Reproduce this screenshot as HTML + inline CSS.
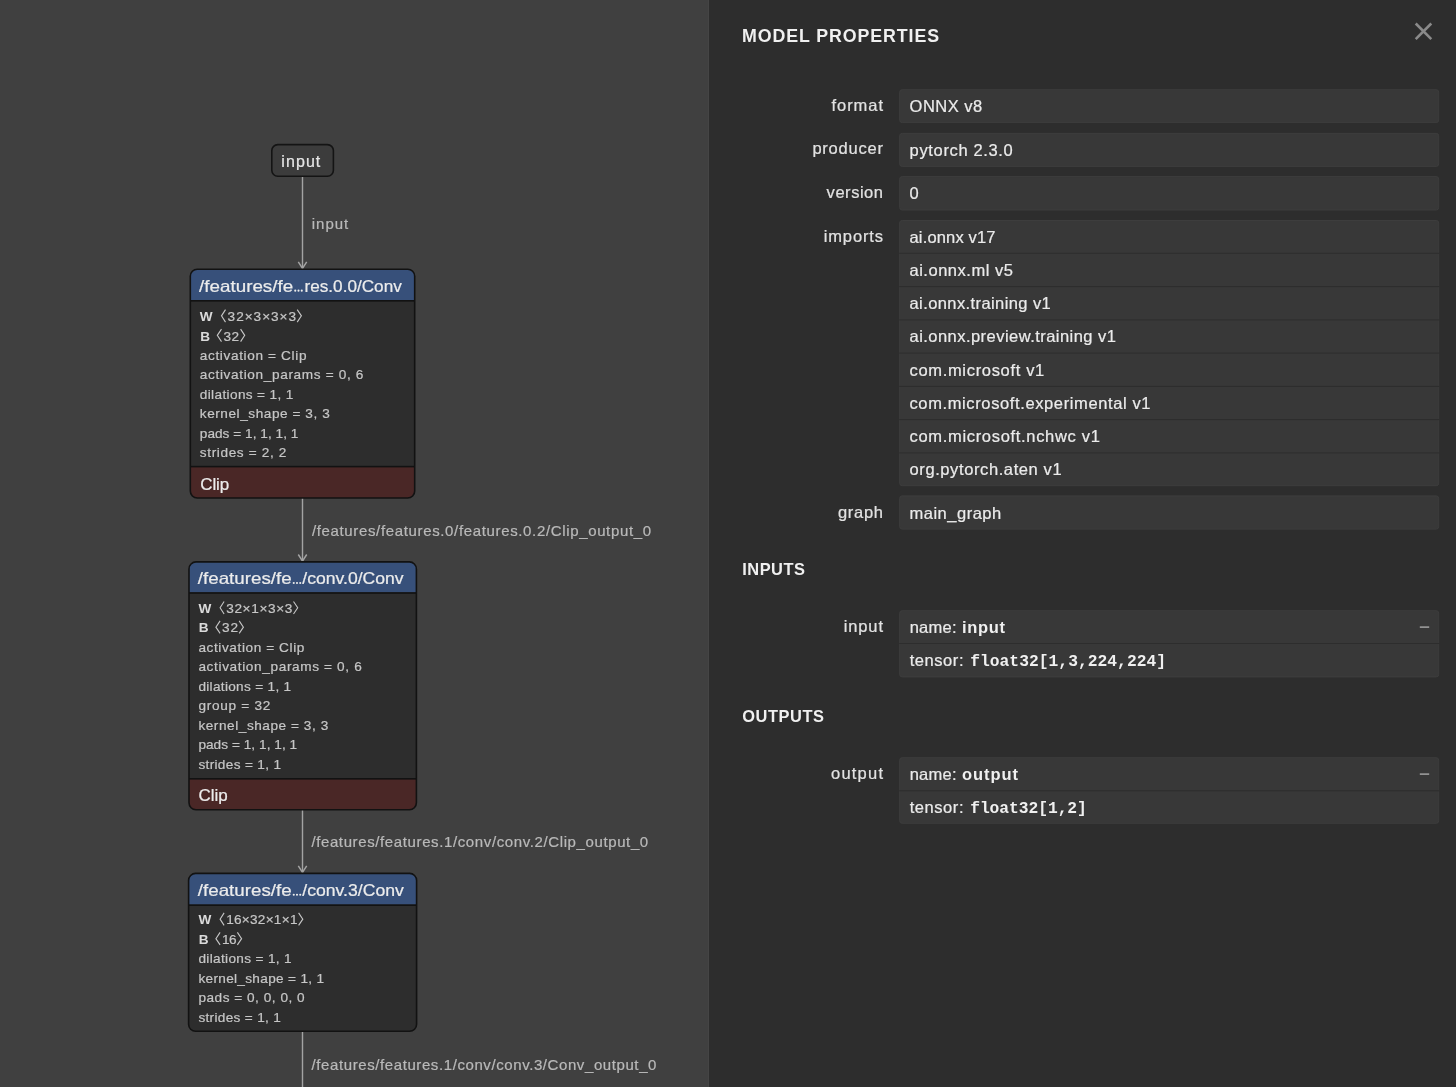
<!DOCTYPE html>
<html><head><meta charset="utf-8"><title>Netron</title>
<style>html,body{margin:0;padding:0;background:#404040;overflow:hidden;width:1456px;height:1087px}svg{display:block;will-change:transform}</style>
</head><body>
<svg width="1456" height="1087" viewBox="0 0 1456 1087"><rect x="0" y="0" width="1456" height="1087" fill="#404040"/>
<line x1="302.5" y1="177" x2="302.5" y2="269" stroke="#a3a3a3" stroke-width="1.4"/><path d="M298.3,261.8 L302.5,268.4 L306.7,261.8" fill="none" stroke="#a3a3a3" stroke-width="1.5" stroke-linejoin="miter"/>
<line x1="302.5" y1="498" x2="302.5" y2="561.7" stroke="#a3a3a3" stroke-width="1.4"/><path d="M298.3,554.5 L302.5,561.1 L306.7,554.5" fill="none" stroke="#a3a3a3" stroke-width="1.5" stroke-linejoin="miter"/>
<line x1="302.5" y1="809.8" x2="302.5" y2="873" stroke="#a3a3a3" stroke-width="1.4"/><path d="M298.3,865.8 L302.5,872.4 L306.7,865.8" fill="none" stroke="#a3a3a3" stroke-width="1.5" stroke-linejoin="miter"/>
<line x1="302.5" y1="1031.3" x2="302.5" y2="1096" stroke="#a3a3a3" stroke-width="1.4"/><path d="M298.3,1088.8 L302.5,1095.4 L306.7,1088.8" fill="none" stroke="#a3a3a3" stroke-width="1.5" stroke-linejoin="miter"/>
<text x="311.80" y="228.80" font-family='"Liberation Sans", sans-serif' font-size="15.0" font-weight="normal" fill="#b9b9b9" stroke="#b9b9b9" stroke-width="0.22" letter-spacing="0.972">input</text>
<text x="311.90" y="536.00" font-family='"Liberation Sans", sans-serif' font-size="15.0" font-weight="normal" fill="#b9b9b9" stroke="#b9b9b9" stroke-width="0.22" letter-spacing="0.648">/features/features.0/features.0.2/Clip_output_0</text>
<text x="311.40" y="847.40" font-family='"Liberation Sans", sans-serif' font-size="15.0" font-weight="normal" fill="#b9b9b9" stroke="#b9b9b9" stroke-width="0.22" letter-spacing="0.616">/features/features.1/conv/conv.2/Clip_output_0</text>
<text x="311.60" y="1069.80" font-family='"Liberation Sans", sans-serif' font-size="15.0" font-weight="normal" fill="#b9b9b9" stroke="#b9b9b9" stroke-width="0.22" letter-spacing="0.590">/features/features.1/conv/conv.3/Conv_output_0</text>
<rect x="271.8" y="144.6" width="61.6" height="31.6" rx="6" ry="6" fill="#3c3c3c" stroke="#141414" stroke-width="1.6"/>
<text x="281.30" y="167.10" font-family='"Liberation Sans", sans-serif' font-size="16.0" font-weight="normal" fill="#e6e6e6" stroke="#e6e6e6" stroke-width="0.22" letter-spacing="1.080">input</text>
<clipPath id="c269"><rect x="190.3" y="269.2" width="224.39999999999998" height="228.8" rx="7" ry="7"/></clipPath><g clip-path="url(#c269)"><rect x="190.3" y="269.2" width="224.39999999999998" height="228.8" fill="#2d2d2d"/><rect x="190.3" y="269.2" width="224.39999999999998" height="31.0" fill="#37507a"/><rect x="190.3" y="300.0" width="224.39999999999998" height="1.6" fill="#121212"/><rect x="190.3" y="466.6" width="224.39999999999998" height="31.399999999999977" fill="#4a2726"/><rect x="190.3" y="465.8" width="224.39999999999998" height="1.6" fill="#121212"/></g><rect x="190.3" y="269.2" width="224.39999999999998" height="228.8" rx="7" ry="7" fill="none" stroke="#121212" stroke-width="1.6"/>
<text x="199.10" y="291.70" font-family='"Liberation Sans", sans-serif' font-size="16.5" font-weight="normal" fill="#ececec" stroke="#ececec" stroke-width="0.22" textLength="94.11" lengthAdjust="spacingAndGlyphs">/features/fe</text>
<circle cx="295.25" cy="290.65" r="1.05" fill="#ececec"/><circle cx="298.50" cy="290.65" r="1.05" fill="#ececec"/><circle cx="301.75" cy="290.65" r="1.05" fill="#ececec"/>
<text x="304.50" y="291.70" font-family='"Liberation Sans", sans-serif' font-size="16.5" font-weight="normal" fill="#ececec" stroke="#ececec" stroke-width="0.22" textLength="97.29" lengthAdjust="spacingAndGlyphs">res.0.0/Conv</text>
<text x="199.80" y="321.00" font-family='"Liberation Sans", sans-serif' font-size="13.6" font-weight="bold" fill="#dadada" letter-spacing="-0.352">W</text><path d="M225.5,309.6 L221.5,315.85 L225.5,322.1" fill="none" stroke="#c6c6c6" stroke-width="1.1"/><text x="227.60" y="321.00" font-family='"Liberation Sans", sans-serif' font-size="13.6" font-weight="normal" fill="#c6c6c6" stroke="#c6c6c6" stroke-width="0.22" letter-spacing="0.980">32×3×3×3</text><path d="M297.2,309.6 L301.4,315.85 L297.2,322.1" fill="none" stroke="#c6c6c6" stroke-width="1.1"/>
<text x="200.20" y="340.50" font-family='"Liberation Sans", sans-serif' font-size="13.6" font-weight="bold" fill="#dadada" letter-spacing="-1.926">B</text><path d="M221.5,329.1 L217.3,335.35 L221.5,341.6" fill="none" stroke="#c6c6c6" stroke-width="1.1"/><text x="223.40" y="340.50" font-family='"Liberation Sans", sans-serif' font-size="13.6" font-weight="normal" fill="#c6c6c6" stroke="#c6c6c6" stroke-width="0.22" letter-spacing="0.470">32</text><path d="M240.6,329.1 L244.7,335.35 L240.6,341.6" fill="none" stroke="#c6c6c6" stroke-width="1.1"/>
<text x="199.80" y="360.00" font-family='"Liberation Sans", sans-serif' font-size="13.6" font-weight="normal" fill="#c6c6c6" stroke="#c6c6c6" stroke-width="0.22" letter-spacing="0.644">activation = Clip</text>
<text x="199.80" y="379.40" font-family='"Liberation Sans", sans-serif' font-size="13.6" font-weight="normal" fill="#c6c6c6" stroke="#c6c6c6" stroke-width="0.22" letter-spacing="0.655">activation_params = 0, 6</text>
<text x="199.80" y="398.90" font-family='"Liberation Sans", sans-serif' font-size="13.6" font-weight="normal" fill="#c6c6c6" stroke="#c6c6c6" stroke-width="0.22" letter-spacing="0.367">dilations = 1, 1</text>
<text x="199.80" y="418.30" font-family='"Liberation Sans", sans-serif' font-size="13.6" font-weight="normal" fill="#c6c6c6" stroke="#c6c6c6" stroke-width="0.22" letter-spacing="0.564">kernel_shape = 3, 3</text>
<text x="199.80" y="437.80" font-family='"Liberation Sans", sans-serif' font-size="13.6" font-weight="normal" fill="#c6c6c6" stroke="#c6c6c6" stroke-width="0.22" letter-spacing="0.042">pads = 1, 1, 1, 1</text>
<text x="199.80" y="457.20" font-family='"Liberation Sans", sans-serif' font-size="13.6" font-weight="normal" fill="#c6c6c6" stroke="#c6c6c6" stroke-width="0.22" letter-spacing="0.636">strides = 2, 2</text>
<text x="200.20" y="489.60" font-family='"Liberation Sans", sans-serif' font-size="17.0" font-weight="normal" fill="#ececec" stroke="#ececec" stroke-width="0.22" letter-spacing="-0.061">Clip</text>
<clipPath id="c561"><rect x="189.0" y="561.9" width="227.39999999999998" height="247.89999999999998" rx="7" ry="7"/></clipPath><g clip-path="url(#c561)"><rect x="189.0" y="561.9" width="227.39999999999998" height="247.89999999999998" fill="#2d2d2d"/><rect x="189.0" y="561.9" width="227.39999999999998" height="30.5" fill="#37507a"/><rect x="189.0" y="592.1999999999999" width="227.39999999999998" height="1.6" fill="#121212"/><rect x="189.0" y="778.8" width="227.39999999999998" height="31.0" fill="#4a2726"/><rect x="189.0" y="778.0" width="227.39999999999998" height="1.6" fill="#121212"/></g><rect x="189.0" y="561.9" width="227.39999999999998" height="247.89999999999998" rx="7" ry="7" fill="none" stroke="#121212" stroke-width="1.6"/>
<text x="197.80" y="584.00" font-family='"Liberation Sans", sans-serif' font-size="16.5" font-weight="normal" fill="#ececec" stroke="#ececec" stroke-width="0.22" textLength="93.91" lengthAdjust="spacingAndGlyphs">/features/fe</text>
<circle cx="293.75" cy="582.95" r="1.05" fill="#ececec"/><circle cx="297.00" cy="582.95" r="1.05" fill="#ececec"/><circle cx="300.25" cy="582.95" r="1.05" fill="#ececec"/>
<text x="302.30" y="584.00" font-family='"Liberation Sans", sans-serif' font-size="16.5" font-weight="normal" fill="#ececec" stroke="#ececec" stroke-width="0.22" textLength="101.30" lengthAdjust="spacingAndGlyphs">/conv.0/Conv</text>
<text x="198.40" y="612.90" font-family='"Liberation Sans", sans-serif' font-size="13.6" font-weight="bold" fill="#dadada" letter-spacing="-0.352">W</text><path d="M224.1,601.5 L220.1,607.75 L224.1,614.0" fill="none" stroke="#c6c6c6" stroke-width="1.1"/><text x="226.20" y="612.90" font-family='"Liberation Sans", sans-serif' font-size="13.6" font-weight="normal" fill="#c6c6c6" stroke="#c6c6c6" stroke-width="0.22" letter-spacing="0.651">32×1×3×3</text><path d="M293.5,601.5 L297.7,607.75 L293.5,614.0" fill="none" stroke="#c6c6c6" stroke-width="1.1"/>
<text x="198.80" y="632.30" font-family='"Liberation Sans", sans-serif' font-size="13.6" font-weight="bold" fill="#dadada" letter-spacing="-1.926">B</text><path d="M220.1,620.9 L215.9,627.15 L220.1,633.4" fill="none" stroke="#c6c6c6" stroke-width="1.1"/><text x="222.00" y="632.30" font-family='"Liberation Sans", sans-serif' font-size="13.6" font-weight="normal" fill="#c6c6c6" stroke="#c6c6c6" stroke-width="0.22" letter-spacing="0.970">32</text><path d="M239.2,620.9 L243.4,627.15 L239.2,633.4" fill="none" stroke="#c6c6c6" stroke-width="1.1"/>
<text x="198.40" y="651.80" font-family='"Liberation Sans", sans-serif' font-size="13.6" font-weight="normal" fill="#c6c6c6" stroke="#c6c6c6" stroke-width="0.22" letter-spacing="0.601">activation = Clip</text>
<text x="198.40" y="671.30" font-family='"Liberation Sans", sans-serif' font-size="13.6" font-weight="normal" fill="#c6c6c6" stroke="#c6c6c6" stroke-width="0.22" letter-spacing="0.646">activation_params = 0, 6</text>
<text x="198.40" y="690.70" font-family='"Liberation Sans", sans-serif' font-size="13.6" font-weight="normal" fill="#c6c6c6" stroke="#c6c6c6" stroke-width="0.22" letter-spacing="0.314">dilations = 1, 1</text>
<text x="198.40" y="710.20" font-family='"Liberation Sans", sans-serif' font-size="13.6" font-weight="normal" fill="#c6c6c6" stroke="#c6c6c6" stroke-width="0.22" letter-spacing="0.732">group = 32</text>
<text x="198.40" y="729.70" font-family='"Liberation Sans", sans-serif' font-size="13.6" font-weight="normal" fill="#c6c6c6" stroke="#c6c6c6" stroke-width="0.22" letter-spacing="0.558">kernel_shape = 3, 3</text>
<text x="198.40" y="749.20" font-family='"Liberation Sans", sans-serif' font-size="13.6" font-weight="normal" fill="#c6c6c6" stroke="#c6c6c6" stroke-width="0.22" letter-spacing="0.055">pads = 1, 1, 1, 1</text>
<text x="198.40" y="768.60" font-family='"Liberation Sans", sans-serif' font-size="13.6" font-weight="normal" fill="#c6c6c6" stroke="#c6c6c6" stroke-width="0.22" letter-spacing="0.336">strides = 1, 1</text>
<text x="198.60" y="800.90" font-family='"Liberation Sans", sans-serif' font-size="17.0" font-weight="normal" fill="#ececec" stroke="#ececec" stroke-width="0.22" letter-spacing="-0.061">Clip</text>
<clipPath id="c873"><rect x="188.6" y="873.4" width="228.00000000000003" height="157.89999999999998" rx="7" ry="7"/></clipPath><g clip-path="url(#c873)"><rect x="188.6" y="873.4" width="228.00000000000003" height="157.89999999999998" fill="#2d2d2d"/><rect x="188.6" y="873.4" width="228.00000000000003" height="31.200000000000045" fill="#37507a"/><rect x="188.6" y="904.4" width="228.00000000000003" height="1.6" fill="#121212"/></g><rect x="188.6" y="873.4" width="228.00000000000003" height="157.89999999999998" rx="7" ry="7" fill="none" stroke="#121212" stroke-width="1.6"/>
<text x="197.80" y="895.80" font-family='"Liberation Sans", sans-serif' font-size="16.5" font-weight="normal" fill="#ececec" stroke="#ececec" stroke-width="0.22" textLength="93.91" lengthAdjust="spacingAndGlyphs">/features/fe</text>
<circle cx="293.75" cy="894.75" r="1.05" fill="#ececec"/><circle cx="297.00" cy="894.75" r="1.05" fill="#ececec"/><circle cx="300.25" cy="894.75" r="1.05" fill="#ececec"/>
<text x="302.30" y="895.80" font-family='"Liberation Sans", sans-serif' font-size="16.5" font-weight="normal" fill="#ececec" stroke="#ececec" stroke-width="0.22" textLength="101.50" lengthAdjust="spacingAndGlyphs">/conv.3/Conv</text>
<text x="198.40" y="924.30" font-family='"Liberation Sans", sans-serif' font-size="13.6" font-weight="bold" fill="#dadada" letter-spacing="-0.352">W</text><path d="M224.1,912.9 L220.1,919.15 L224.1,925.4" fill="none" stroke="#c6c6c6" stroke-width="1.1"/><text x="226.20" y="924.30" font-family='"Liberation Sans", sans-serif' font-size="13.6" font-weight="normal" fill="#c6c6c6" stroke="#c6c6c6" stroke-width="0.22" letter-spacing="0.260">16×32×1×1</text><path d="M298.6,912.9 L302.8,919.15 L298.6,925.4" fill="none" stroke="#c6c6c6" stroke-width="1.1"/>
<text x="198.80" y="943.80" font-family='"Liberation Sans", sans-serif' font-size="13.6" font-weight="bold" fill="#dadada" letter-spacing="-1.926">B</text><path d="M220.1,932.4 L215.9,938.65 L220.1,944.9" fill="none" stroke="#c6c6c6" stroke-width="1.1"/><text x="222.00" y="943.80" font-family='"Liberation Sans", sans-serif' font-size="13.6" font-weight="normal" fill="#c6c6c6" stroke="#c6c6c6" stroke-width="0.22" letter-spacing="-0.630">16</text><path d="M237.4,932.4 L241.6,938.65 L237.4,944.9" fill="none" stroke="#c6c6c6" stroke-width="1.1"/>
<text x="198.40" y="963.30" font-family='"Liberation Sans", sans-serif' font-size="13.6" font-weight="normal" fill="#c6c6c6" stroke="#c6c6c6" stroke-width="0.22" letter-spacing="0.347">dilations = 1, 1</text>
<text x="198.40" y="982.80" font-family='"Liberation Sans", sans-serif' font-size="13.6" font-weight="normal" fill="#c6c6c6" stroke="#c6c6c6" stroke-width="0.22" letter-spacing="0.325">kernel_shape = 1, 1</text>
<text x="198.40" y="1002.40" font-family='"Liberation Sans", sans-serif' font-size="13.6" font-weight="normal" fill="#c6c6c6" stroke="#c6c6c6" stroke-width="0.22" letter-spacing="0.524">pads = 0, 0, 0, 0</text>
<text x="198.40" y="1021.90" font-family='"Liberation Sans", sans-serif' font-size="13.6" font-weight="normal" fill="#c6c6c6" stroke="#c6c6c6" stroke-width="0.22" letter-spacing="0.328">strides = 1, 1</text>
<rect x="708" y="0" width="1" height="1087" fill="#454545"/>
<rect x="709" y="0" width="747" height="1087" fill="#2d2d2d"/>
<text x="742.10" y="41.60" font-family='"Liberation Sans", sans-serif' font-size="17.8" font-weight="bold" fill="#f0f0f0" letter-spacing="0.903">MODEL PROPERTIES</text>
<path d="M1415.7,23.5 L1431.3,39.1 M1431.3,23.5 L1415.7,39.1" stroke="#8a8a8a" stroke-width="2.6" fill="none"/>
<rect x="899.7" y="89.7" width="539.0" height="32.89999999999999" rx="2.5" ry="2.5" fill="#383838" stroke="#3d3d3d" stroke-width="1"/>
<text x="831.60" y="110.90" font-family='"Liberation Sans", sans-serif' font-size="16.5" font-weight="normal" fill="#e2e2e2" stroke="#e2e2e2" stroke-width="0.22" letter-spacing="0.924">format</text>
<text x="909.60" y="112.30" font-family='"Liberation Sans", sans-serif' font-size="16.5" font-weight="normal" fill="#ebebeb" stroke="#ebebeb" stroke-width="0.22" letter-spacing="0.471">ONNX v8</text>
<rect x="899.7" y="133.4" width="539.0" height="33.0" rx="2.5" ry="2.5" fill="#383838" stroke="#3d3d3d" stroke-width="1"/>
<text x="812.40" y="154.30" font-family='"Liberation Sans", sans-serif' font-size="16.5" font-weight="normal" fill="#e2e2e2" stroke="#e2e2e2" stroke-width="0.22" letter-spacing="0.781">producer</text>
<text x="909.60" y="155.60" font-family='"Liberation Sans", sans-serif' font-size="16.5" font-weight="normal" fill="#ebebeb" stroke="#ebebeb" stroke-width="0.22" letter-spacing="0.649">pytorch 2.3.0</text>
<rect x="899.7" y="176.6" width="539.0" height="33.400000000000006" rx="2.5" ry="2.5" fill="#383838" stroke="#3d3d3d" stroke-width="1"/>
<text x="826.60" y="198.00" font-family='"Liberation Sans", sans-serif' font-size="16.5" font-weight="normal" fill="#e2e2e2" stroke="#e2e2e2" stroke-width="0.22" letter-spacing="0.538">version</text>
<text x="909.60" y="199.20" font-family='"Liberation Sans", sans-serif' font-size="16.5" font-weight="normal" fill="#ebebeb" stroke="#ebebeb" stroke-width="0.22" letter-spacing="0.142">0</text>
<rect x="899.7" y="220.5" width="539.0" height="265.2" rx="2.5" ry="2.5" fill="#383838" stroke="#3d3d3d" stroke-width="1"/>
<text x="823.70" y="241.50" font-family='"Liberation Sans", sans-serif' font-size="16.5" font-weight="normal" fill="#e2e2e2" stroke="#e2e2e2" stroke-width="0.22" letter-spacing="0.870">imports</text>
<rect x="899.2" y="252.8" width="540.0" height="1" fill="#2d2d2d"/>
<rect x="899.2" y="286.1" width="540.0" height="1" fill="#2d2d2d"/>
<rect x="899.2" y="319.4" width="540.0" height="1" fill="#2d2d2d"/>
<rect x="899.2" y="352.6" width="540.0" height="1" fill="#2d2d2d"/>
<rect x="899.2" y="385.9" width="540.0" height="1" fill="#2d2d2d"/>
<rect x="899.2" y="419.1" width="540.0" height="1" fill="#2d2d2d"/>
<rect x="899.2" y="452.4" width="540.0" height="1" fill="#2d2d2d"/>
<text x="909.50" y="243.00" font-family='"Liberation Sans", sans-serif' font-size="16.5" font-weight="normal" fill="#ebebeb" stroke="#ebebeb" stroke-width="0.22" letter-spacing="0.160">ai.onnx v17</text>
<text x="909.50" y="276.30" font-family='"Liberation Sans", sans-serif' font-size="16.5" font-weight="normal" fill="#ebebeb" stroke="#ebebeb" stroke-width="0.22" letter-spacing="0.514">ai.onnx.ml v5</text>
<text x="909.50" y="309.30" font-family='"Liberation Sans", sans-serif' font-size="16.5" font-weight="normal" fill="#ebebeb" stroke="#ebebeb" stroke-width="0.22" letter-spacing="0.409">ai.onnx.training v1</text>
<text x="909.50" y="342.40" font-family='"Liberation Sans", sans-serif' font-size="16.5" font-weight="normal" fill="#ebebeb" stroke="#ebebeb" stroke-width="0.22" letter-spacing="0.460">ai.onnx.preview.training v1</text>
<text x="909.50" y="375.70" font-family='"Liberation Sans", sans-serif' font-size="16.5" font-weight="normal" fill="#ebebeb" stroke="#ebebeb" stroke-width="0.22" letter-spacing="0.673">com.microsoft v1</text>
<text x="909.50" y="408.80" font-family='"Liberation Sans", sans-serif' font-size="16.5" font-weight="normal" fill="#ebebeb" stroke="#ebebeb" stroke-width="0.22" letter-spacing="0.616">com.microsoft.experimental v1</text>
<text x="909.50" y="441.90" font-family='"Liberation Sans", sans-serif' font-size="16.5" font-weight="normal" fill="#ebebeb" stroke="#ebebeb" stroke-width="0.22" letter-spacing="0.683">com.microsoft.nchwc v1</text>
<text x="909.50" y="475.00" font-family='"Liberation Sans", sans-serif' font-size="16.5" font-weight="normal" fill="#ebebeb" stroke="#ebebeb" stroke-width="0.22" letter-spacing="0.603">org.pytorch.aten v1</text>
<rect x="899.7" y="495.9" width="539.0" height="33.200000000000045" rx="2.5" ry="2.5" fill="#383838" stroke="#3d3d3d" stroke-width="1"/>
<text x="837.90" y="518.00" font-family='"Liberation Sans", sans-serif' font-size="16.5" font-weight="normal" fill="#e2e2e2" stroke="#e2e2e2" stroke-width="0.22" letter-spacing="0.725">graph</text>
<text x="909.50" y="519.00" font-family='"Liberation Sans", sans-serif' font-size="16.5" font-weight="normal" fill="#ebebeb" stroke="#ebebeb" stroke-width="0.22" letter-spacing="0.504">main_graph</text>
<text x="742.20" y="574.60" font-family='"Liberation Sans", sans-serif' font-size="16.4" font-weight="bold" fill="#f0f0f0" letter-spacing="0.531">INPUTS</text>
<rect x="899.7" y="610.7" width="539.0" height="66.19999999999993" rx="2.5" ry="2.5" fill="#383838" stroke="#3d3d3d" stroke-width="1"/>
<text x="843.70" y="631.50" font-family='"Liberation Sans", sans-serif' font-size="16.5" font-weight="normal" fill="#e2e2e2" stroke="#e2e2e2" stroke-width="0.22" letter-spacing="0.884">input</text>
<rect x="899.2" y="643.0" width="540.0" height="1" fill="#2d2d2d"/>
<text x="909.70" y="633.00" font-family='"Liberation Sans", sans-serif' font-size="16.5" font-weight="normal" fill="#ebebeb" stroke="#ebebeb" stroke-width="0.22" letter-spacing="0.232">name:</text>
<text x="962.00" y="633.00" font-family='"Liberation Sans", sans-serif' font-size="16.5" font-weight="bold" fill="#f0f0f0" letter-spacing="0.675">input</text>
<text x="909.70" y="666.00" font-family='"Liberation Sans", sans-serif' font-size="16.5" font-weight="normal" fill="#ebebeb" stroke="#ebebeb" stroke-width="0.22" letter-spacing="0.559">tensor:</text>
<text x="970.20" y="666.00" font-family='"Liberation Mono", monospace' font-size="16.3" font-weight="bold" fill="#f0f0f0" letter-spacing="0.024">float32[1,3,224,224]</text>
<rect x="1419.8" y="626.4" width="9.4" height="1.4" fill="#a8a8a8"/>
<text x="742.20" y="722.20" font-family='"Liberation Sans", sans-serif' font-size="16.4" font-weight="bold" fill="#f0f0f0" letter-spacing="0.575">OUTPUTS</text>
<rect x="899.7" y="757.7" width="539.0" height="65.59999999999991" rx="2.5" ry="2.5" fill="#383838" stroke="#3d3d3d" stroke-width="1"/>
<text x="831.00" y="778.50" font-family='"Liberation Sans", sans-serif' font-size="16.5" font-weight="normal" fill="#e2e2e2" stroke="#e2e2e2" stroke-width="0.22" letter-spacing="1.226">output</text>
<rect x="899.2" y="790.3" width="540.0" height="1" fill="#2d2d2d"/>
<text x="909.70" y="780.00" font-family='"Liberation Sans", sans-serif' font-size="16.5" font-weight="normal" fill="#ebebeb" stroke="#ebebeb" stroke-width="0.22" letter-spacing="0.232">name:</text>
<text x="962.00" y="780.00" font-family='"Liberation Sans", sans-serif' font-size="16.5" font-weight="bold" fill="#f0f0f0" letter-spacing="0.937">output</text>
<text x="909.70" y="813.00" font-family='"Liberation Sans", sans-serif' font-size="16.5" font-weight="normal" fill="#ebebeb" stroke="#ebebeb" stroke-width="0.22" letter-spacing="0.559">tensor:</text>
<text x="970.20" y="813.00" font-family='"Liberation Mono", monospace' font-size="16.3" font-weight="bold" fill="#f0f0f0" letter-spacing="-0.055">float32[1,2]</text>
<rect x="1419.8" y="773.4" width="9.4" height="1.4" fill="#a8a8a8"/></svg>
</body></html>
